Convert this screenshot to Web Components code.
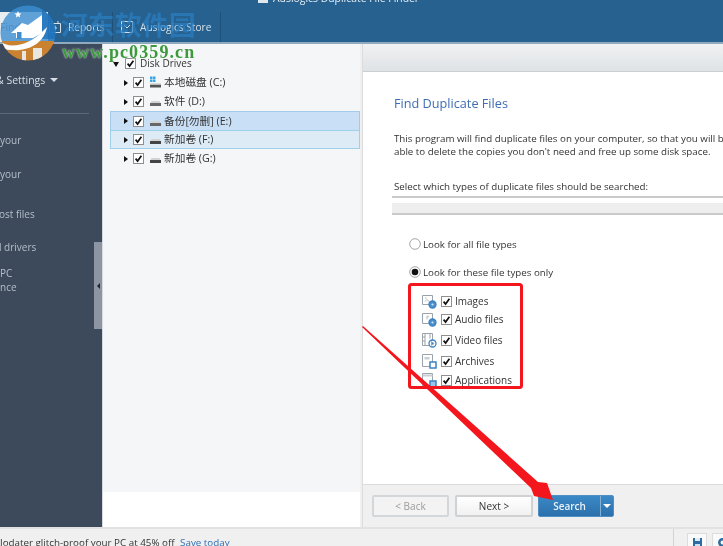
<!doctype html>
<html><head><meta charset="utf-8"><style>
html,body{margin:0;padding:0;width:723px;height:546px;overflow:hidden;background:#f0f0f0}
body{font-family:"Open Sans","Noto Sans CJK SC",sans-serif}
</style></head><body>
<app-shell>
  <top-bar slot="top"></top-bar>
  <side-bar slot="side"></side-bar>
  <drive-tree slot="tree">
    <tree-row root label="Disk Drives"></tree-row>
    <tree-row win label="本地磁盘 (C:)"></tree-row>
    <tree-row label="软件 (D:)"></tree-row>
    <tree-row state="sel" label="备份[勿删] (E:)"></tree-row>
    <tree-row state="hov" label="新加卷 (F:)"></tree-row>
    <tree-row label="新加卷 (G:)"></tree-row>
  </drive-tree>
  <wizard-pane slot="wizard"></wizard-pane>
  <status-bar slot="status"></status-bar>
</app-shell>
<script>
const CHECK=`<svg width="11" height="11" viewBox="0 0 11 11" style="display:block"><rect x=".5" y=".5" width="10" height="10" fill="#fff" stroke="#8f8f8f"/><path d="M2.6 5.6 4.6 8 8.4 2.8" fill="none" stroke="#111" stroke-width="1.7"/></svg>`;
function def(name,html,init){customElements.define(name,class extends HTMLElement{
  connectedCallback(){if(this.shadowRoot)return;const r=this.attachShadow({mode:'open'});r.innerHTML=typeof html==='function'?html(this):html;if(init)init(this,r);}
});}

def('app-shell',`<style>
:host{display:grid;position:relative;width:723px;height:546px;overflow:hidden;grid-template-columns:103px 257px 1fr;grid-template-rows:44px 483px 19px}
.t{grid-column:1/4}.st{grid-column:1/4}
</style>
<div class="t"><slot name="top"></slot></div>
<slot name="side"></slot><slot name="tree"></slot><slot name="wizard"></slot>
<div class="st"><slot name="status"></slot></div>
<water-mark></water-mark><red-marks></red-marks>`);

def('top-bar',`<style>
:host{display:flex;height:44px;box-sizing:border-box;background:#27618f;border-bottom:2px solid #8fa9bf;position:relative;color:#d5e2ec;font-size:10.1px;overflow:hidden;filter:blur(.35px)}
.title{position:absolute;left:258px;top:-9px;display:flex;gap:5px;align-items:center;font-size:10.4px;white-space:nowrap;color:#e4edf4}
.row{display:flex;align-items:flex-end;margin-top:12px;height:30px}
.finder{width:48px;height:30px;background:#e9edf0;color:#7d8b97;display:flex;align-items:center;font-size:10.5px}
.tab{display:flex;align-items:center;gap:6px;height:30px;box-sizing:border-box;border-right:1px solid #1f5078}
.a{width:65px}.b{width:108px;padding-left:7px}
svg{display:block;flex:none}
</style>
<div class="title"><svg width="10" height="10"><rect width="10" height="10" fill="#dfe8ee"/></svg><span>Auslogics Duplicate File Finder</span></div>
<div class="row">
<div class="finder">Finder</div>
<div class="tab a"><svg width="14" height="14" viewBox="0 0 14 14" fill="none" stroke="#d5e2ec"><path d="M1.5 3.5h11v9h-11zM4 1v3M10 1v3M7 5.500v5M5 8h4"/></svg><span>Reports</span></div>
<div class="tab b"><svg width="14" height="14" viewBox="0 0 14 14" fill="none" stroke="#d5e2ec"><path d="M1.500 1.500h11v11h-11zM4 5l3 3 3-3"/></svg><span>Auslogics Store</span></div>
</div>`);

def('side-bar',`<style>
:host{display:block;position:relative;background:#3c4a5c;border-right:1px solid #d7dbe0;box-sizing:border-box;color:#b6bec8;font-size:10px;overflow:hidden;padding-top:28px;filter:blur(.35px)}
.set{display:flex;align-items:center;gap:5px;line-height:16px;color:#d8dde3;font-size:10.5px;margin-left:-4px}
.set i{width:0;height:0;border:4px solid transparent;border-top-color:#d8dde3;border-bottom:0}
hr{margin:25px 13px 0 0;border:0;height:1px;background:#5d6877}
p{margin:0;line-height:14px;white-space:nowrap}
.h{position:absolute;right:0;top:198px;width:8px;height:87px;background:#8d95a3;display:flex;align-items:center;justify-content:center}
.h i{width:0;height:0;border:3px solid transparent;border-right-color:#20262e;border-left:0}
</style>
<div class="set"><span>&amp; Settings</span><i></i></div><hr>
<p style="margin-top:19px">your</p>
<p style="margin-top:20px">your</p>
<p style="margin-top:26px;margin-left:-1px">ost files</p>
<p style="margin-top:19px;margin-left:-1px">l drivers</p>
<p style="margin-top:12px">PC</p>
<p>nce</p>
<div class="h"><i></i></div>`);

def('drive-tree',`<style>
:host{display:flex;flex-direction:column;background:linear-gradient(#f5f6f8 0,#f5f6f8 448px,#fff 448px);padding:10px 0 0 7px;box-sizing:border-box;filter:blur(.3px)}
</style><slot></slot>`);

def('tree-row',h=>{
 const root=h.hasAttribute('root'),st=h.getAttribute('state');
 const bg=st==='sel'?'background:#c9dff6;border:1px solid #a5c9e8;border-width:1px 1px 0 1px;':st==='hov'?'background:#dcebf6;border:1px solid #9fd0ea;':'border:1px solid transparent;';
 const drive=h.hasAttribute('win')?`<svg width="13" height="13" viewBox="0 0 13 13"><path d="M1 .500h2.500v2.500H1zM4 .500h2.500v2.500H4zM1 3.500h2.500v2.500H1zM4 3.500h2.500v2.500H4z" fill="#36a6e6"/><rect x="1" y="7.500" width="11" height="1.500" fill="#bbb"/><rect x="1" y="9" width="11" height="2.500" fill="#555"/></svg>`:`<svg width="13" height="13" viewBox="0 0 13 13"><path d="M2.500 6h8l1 2h-10z" fill="#d2d2d2"/><rect x="1" y="8" width="11" height="3" fill="${st==='hov'||h.getAttribute('label').includes('G:')?'#444':'#666'}"/></svg>`;
 const tri=root?`<i style="width:0;height:0;border:3.500px solid transparent;border-top:5px solid #111;border-bottom:0;margin:1px 0 0 0"></i>`:`<i style="width:0;height:0;border:3.500px solid transparent;border-left:4.500px solid #111;border-right:0"></i>`;
 return `<style>
:host{display:flex;align-items:center;height:19px;box-sizing:border-box;${bg}color:#333;font-size:${root?'10px':'10.7px'};white-space:nowrap;padding-left:${root?'2px':'13px'}}
.g{width:${root?'12px':'9px'};display:flex}.c{margin-right:${root?'4px':'5px'}}.d{margin-right:2px}
.l{position:relative;top:-1px}
svg{display:block}
</style><span class="g">${tri}</span><span class="c">${CHECK}</span>${root?'':`<span class="d">${drive}</span>`}<span class="l">${h.getAttribute('label')}</span>`;
});

def('wizard-pane',`<style>
:host{display:flex;flex-direction:column;margin-left:2px;background:#fff;border-left:1px solid #dcdcdc;box-sizing:border-box;color:#333;filter:blur(.3px)}
.hd{height:28px;box-sizing:border-box;background:linear-gradient(#f0f1f2,#dfe3e6);border-bottom:1px solid #ccd0d3;flex:none}
.bd{flex:1;padding:22px 0 0 31px;overflow:hidden;white-space:nowrap;font-size:9.75px}
h1{margin:0;font-size:12.7px;font-weight:400;color:#3f6db3;line-height:18px}
p{margin:0;line-height:13px}
.intro{margin-top:20px}
.sel{margin-top:22px}
.band{margin:3px 0 0 -2px;border-top:2px solid #c9c9c9;border-bottom:2px solid #c9c9c9;height:15px;background:linear-gradient(#fff 5px,#eee 5px)}
.opts{margin:22px 0 0 15px;display:flex;flex-direction:column}
.r{display:flex;align-items:center;gap:2px;height:14px}
.r+.r{margin-top:14px}
.r svg{display:block;flex:none}
.ft{height:43px;flex:none;box-sizing:border-box;background:#f0f0f0;border-top:1px solid #dcdcdc;padding:10px 0 0 9px;display:flex;gap:5px;align-items:flex-start}
.files{display:flex;flex-direction:column;margin:12px 0 0 13px}
</style>
<div class="hd"></div>
<div class="bd">
<h1>Find Duplicate Files</h1>
<p class="intro">This program will find duplicate files on your computer, so that you will be<br>able to delete the copies you don't need and free up some disk space.</p>
<p class="sel">Select which types of duplicate files should be searched:</p>
<div class="band"></div>
<div class="opts">
<div class="r"><svg width="12" height="12" viewBox="0 0 12 12"><circle cx="6" cy="6" r="5.300" fill="#fff" stroke="#a5a5a5"/></svg><span>Look for all file types</span></div>
<div class="r"><svg width="12" height="12" viewBox="0 0 12 12"><circle cx="6" cy="6" r="5.300" fill="#fff" stroke="#a5a5a5"/><circle cx="6" cy="6" r="3.300" fill="#111"/></svg><span>Look for these file types only</span></div>
<div class="files">
<file-row style="margin-top:1px" kind="img" label="Images"></file-row>
<file-row kind="aud" label="Audio files"></file-row>
<file-row style="margin-top:3px" kind="vid" label="Video files"></file-row>
<file-row style="margin-top:3px" kind="arc" label="Archives"></file-row>
<file-row style="margin-top:1px" kind="app" label="Applications"></file-row>
</div></div></div>
<div class="ft">
<wiz-button w="77" dis>&lt; Back</wiz-button>
<wiz-button style="margin-left:1px" w="78">Next &gt;</wiz-button>
<split-button>Search</split-button>
</div>`);

def('file-row',h=>{
 const k=h.getAttribute('kind');
 const base={img:'<path d="M.5 1.500h10v9H.5z"/><path d="M3 4h1.500M3 7.500l2-2 2.500 2.500" stroke="#b4bac0"/>',aud:'<path d="M.5 1.500h10v10H.5z"/><path d="M5 4v3.500M5 4l2 1" stroke="#b4bac0"/>',vid:'<path d="M.5 .5h10v12H.5zM3 .5v12M8 .5v5"/><path d="M.5 4h2.500M.5 8h2.500"/>',arc:'<path d="M.5 .5h10v12H.5z"/><path d="M2.500 3h5v2.500h-5z" fill="#c9ced3" stroke="none"/>',app:'<path d="M.5 .5h10v12H.5z"/><path d="M.5 1.500h10v2H.5z" fill="#c9ced3" stroke="none"/>'}[k];
 const badge=k==='arc'||k==='app'?`<rect x="8" y="8" width="6" height="6" fill="${k==='app'?'#9cc4e6':'#fff'}" stroke="#3b82c4" stroke-width="1.500"/>`:`<circle cx="10.500" cy="10.500" r="3.500" fill="${k==='vid'?'#fff':'#4a8fca'}" stroke="#3b82c4" stroke-width="1.300"/>`+(k==='vid'?'<path d="M9.500 8.700v3.600l2.600-1.800z" fill="#3b82c4"/>':'<circle cx="10.500" cy="10.500" r="1.100" fill="#cfe2f3" stroke="none"/>');
 return `<style>
:host{display:flex;align-items:center;height:18px;font-size:10px;color:#333}
svg{display:block}
</style><svg width="15" height="15" viewBox="0 0 15 15" fill="none" stroke="#9aa3ab" style="margin-right:4px">${base}${badge}</svg><span style="margin-right:3px">${CHECK}</span><span>${h.getAttribute('label')}</span>`;
});

def('wiz-button',h=>`<style>
:host{display:flex;align-items:center;justify-content:center;box-sizing:border-box;width:${h.getAttribute('w')}px;height:22px;border:2px solid ${h.hasAttribute('dis')?'#d3d7da':'#cfd1d3'};border-radius:2px;background:${h.hasAttribute('dis')?'#f3f3f3':'linear-gradient(#fff,#f1f1f1)'};color:${h.hasAttribute('dis')?'#9a9a9a':'#333'};font-size:10px}
</style><slot></slot>`);

def('split-button',`<style>
:host{display:flex;width:76px;height:22px;box-sizing:border-box;border:1px solid #4f8fc4;border-radius:2px;background:linear-gradient(#3a89c7,#2c70ab);color:#e8f1f8;font-size:10px;font-weight:600}
.m{flex:1;display:flex;align-items:center;justify-content:center;border-right:1px solid #7fb0d8}
.d{width:12px;display:flex;align-items:center;justify-content:center}
.d i{width:0;height:0;border:4px solid transparent;border-top:4px solid #fff;border-bottom:0}
</style><div class="m"><slot></slot></div><div class="d"><i></i></div>`);

def('status-bar',`<style>
:host{display:flex;height:19px;box-sizing:border-box;background:#f0f0f0;border-top:2px solid #e2e2e2;overflow:hidden;font-size:9.8px;color:#333;white-space:nowrap;filter:blur(.3px)}
.msg{flex:1;padding-top:7px;line-height:14px}
a{color:#2f6fb3;margin-left:3px}
.sep{width:1px;height:17px;background:#d2d2d2;margin-right:13px}
.b{width:20px;height:20px;margin:4px 5px 0 0;box-sizing:border-box;background:#fafafa;border:1px solid #dcdcdc;border-bottom:0;display:flex;justify-content:center;padding-top:3px}
.b:last-child{margin-right:-3px}
svg{display:block}
</style><div class="msg">Jodater glitch-proof your PC at 45% off <a>Save today</a></div><div class="sep"></div>
<div class="b"><svg width="11" height="11" viewBox="0 0 11 11"><path d="M1 1h9v9H1z" fill="#2c6ca3"/><path d="M3 1h5v3H3z" fill="#dfeaf3"/><path d="M3 7h5v3H3z" fill="#cfe0ee"/></svg></div>
<div class="b"><svg width="11" height="11" viewBox="0 0 11 11"><circle cx="5.500" cy="5.500" r="3.200" fill="none" stroke="#2c6ca3" stroke-width="2.500"/></svg></div>`);

def('water-mark',`<style>
:host{position:absolute;left:0;top:0;width:200px;height:64px;pointer-events:none}
svg{position:absolute;left:0;top:5px;filter:blur(.5px)}
.cn{position:absolute;left:61px;top:7px;font:700 26.500px/34px "Noto Sans CJK SC",sans-serif;color:#2a7fc4;opacity:.72;white-space:nowrap;letter-spacing:.5px;filter:blur(.5px)}
.en{position:absolute;left:62px;top:42px;font:700 18px/20px "Liberation Serif",serif;color:#3c9a3c;white-space:nowrap;letter-spacing:1.100px;text-shadow:0 0 2px #fff;filter:blur(.4px)}
</style>
<svg width="62" height="60" viewBox="0 0 62 60">
<defs><clipPath id="c"><circle cx="28" cy="28" r="27.500"/></clipPath></defs>
<g clip-path="url(#c)">
<rect width="62" height="38" fill="#3d8fd2" opacity=".8"/>
<path d="M42 0h20v34H42z" fill="#1a6fb8" opacity=".75"/>
<rect y="36" width="62" height="26" fill="#cb8230"/>
<path d="M0 36C8 44 28 42 44 25L47 22C44 40 24 50 0 43z" fill="#fff"/>
<path d="M22 46h4v16h-4zM33 43h9v19h-9z" fill="#e9e6df"/>
<path d="M11 28 22 18l6 2 14-10v18l-9 5H16v-5z" fill="#fff"/>
<path d="M17 27h4.500v7H17z" fill="#3d8fd2"/>
<path d="M18 6l1 2.300 2.400.3-1.800 1.600.5 2.400-2.100-1.300-2.100 1.300.5-2.400-1.800-1.600 2.400-.3z" fill="#fff"/>
</g>
</svg>
<div class="cn">河东软件园</div>
<div class="en">www.pc0359.cn</div>`);

def('red-marks',`<style>
:host{position:absolute;left:0;top:0;width:723px;height:546px;pointer-events:none}
svg{display:block}
</style>
<svg width="723" height="546" viewBox="0 0 723 546" style="filter:blur(.4px)">
<rect x="409.500" y="284.500" width="112" height="103" fill="none" stroke="#f3161c" stroke-width="3" rx="2"/>
<path d="M362 327 363 326 538 482 547 483 553 500 534 496 531 488z" fill="#f3161c"/>
</svg>`);
</script>
</body></html>
